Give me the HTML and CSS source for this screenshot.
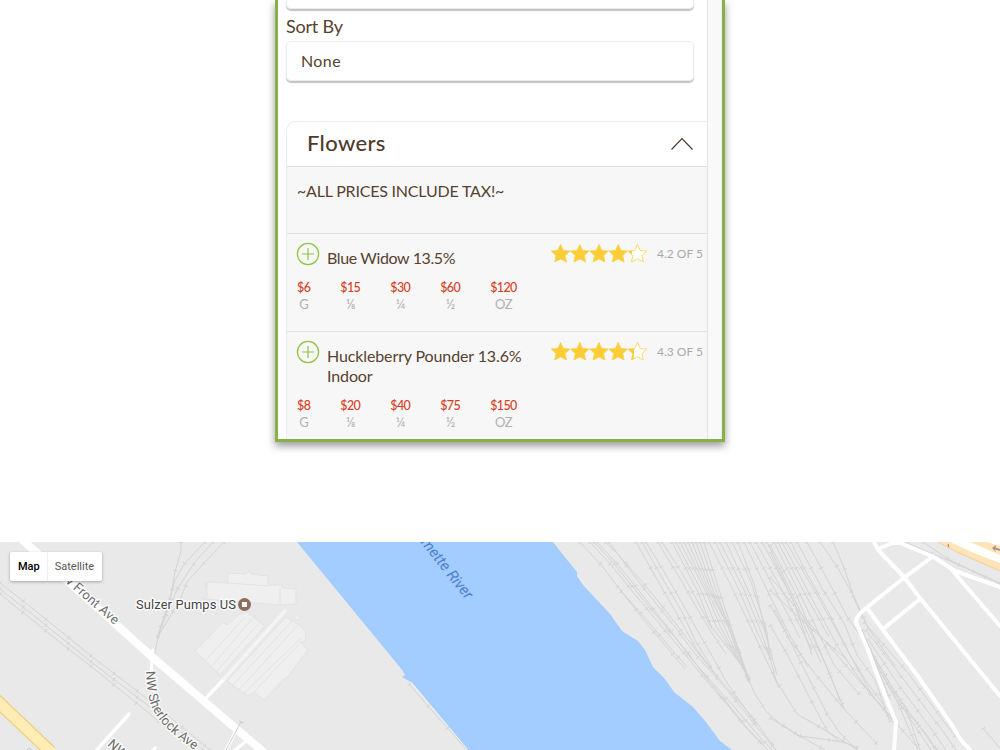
FILE: index.html
```html
<!DOCTYPE html>
<html lang="en">
<head>
<meta charset="utf-8">
<title>Menu</title>
<link rel="stylesheet" href="styles.css">
</head>
<body>
<svg class="defs" width="0" height="0">
  <defs>
    <path id="star" d="M9.6 0.4 L12.3 6.4 L18.9 7.1 L14.1 11.6 L15.5 18 L9.6 14.9 L3.7 18 L5.1 11.6 L0.3 7.1 L6.9 6.4 Z"/>
    <linearGradient id="part2"><stop offset=".2" stop-color="#fccd34"/><stop offset=".2" stop-color="#fff"/></linearGradient>
    <linearGradient id="part3"><stop offset=".33" stop-color="#fccd34"/><stop offset=".33" stop-color="#fff"/></linearGradient>
  </defs>
</svg>
<main class="frame">
  <div class="content">
    <div class="select select-prev"></div>
    <label class="label">Sort By</label>
    <div class="select"><span class="value">None</span></div>
    <section class="group">
      <header class="group-head">
        <h2>Flowers</h2>
        <svg class="chevron" width="24" height="14" viewBox="0 0 24 14"><path d="M1.5 12.5 L12 1.5 L22.5 12.5" fill="none" stroke="#4e3b2a" stroke-width="1.2"/></svg>
      </header>
      <div class="note"><span>~ALL PRICES INCLUDE TAX!~</span></div>
      <article class="item">
        <div class="top">
          <svg class="plus" width="24" height="24" viewBox="0 0 24 24"><circle cx="12" cy="12" r="10.6"/><path d="M12 6v12M6 12h12"/></svg>
          <h3 class="tight">Blue Widow 13.5%</h3>
          <svg class="stars" width="97" height="19" viewBox="0 0 97 19"><use href="#star"/><use href="#star" x="19.2"/><use href="#star" x="38.4"/><use href="#star" x="57.6"/><use href="#star" x="76.8" fill="url(#part2)"/></svg>
          <span class="score">4.2 OF 5</span>
        </div>
        <ul class="prices">
          <li><b>$6</b><i>G</i></li><li><b>$15</b><i>⅛</i></li><li><b>$30</b><i>¼</i></li><li><b>$60</b><i>½</i></li><li><b>$120</b><i>OZ</i></li>
        </ul>
      </article>
      <article class="item">
        <div class="top">
          <svg class="plus" width="24" height="24" viewBox="0 0 24 24"><circle cx="12" cy="12" r="10.6"/><path d="M12 6v12M6 12h12"/></svg>
          <h3>Huckleberry Pounder 13.6% Indoor</h3>
          <svg class="stars" width="97" height="19" viewBox="0 0 97 19"><use href="#star"/><use href="#star" x="19.2"/><use href="#star" x="38.4"/><use href="#star" x="57.6"/><use href="#star" x="76.8" fill="url(#part3)"/></svg>
          <span class="score">4.3 OF 5</span>
        </div>
        <ul class="prices">
          <li><b>$8</b><i>G</i></li><li><b>$20</b><i>⅛</i></li><li><b>$40</b><i>¼</i></li><li><b>$75</b><i>½</i></li><li><b>$150</b><i>OZ</i></li>
        </ul>
      </article>
    </section>
  </div>
  <div class="track"></div>
</main>
<section class="map">
<svg width="1000" height="208" viewBox="0 542 1000 208">
  <defs>
    <path id="rails" d="M0 583L32 608L90 655L150 701L210 750M0 589L32 614L90 661L150 707L203 750M0 594L25 614L67 648L92 667L140 706L194 750
    M181 542V551L175 572L170 600L160 630L151 668M205 542L185 563L175 580L168 605L157 638M213 542L195 562L178 588L170 605L157 638M224 542L205 562L187 582L180 600L157 638
    M409 684L436 715L467 750
    M580 542L602 566L621 591L644 620L665 645L685 669M621 591L646 619L667 644L687 667
    M590 542L612 566L632 591L663 628L684 653L704 678L725 702L745 727L768 750M594 542L616 566L636 591L667 628L688 653L708 680L728 704L748 729L768 750M597 542L620 567L640 592L670 630L690 657L715 686L736 709L757 734L772 750
    M605 542L617 553L638 577L658 601L676 624L695 649L715 674L736 698L757 723L776 750M609 542L626 565L646 591L675 627L696 655L716 677L736 701L756 726L776 750
    M636 542L650 567L666 595L682 623L697 650L716 675M642 542L652 560L668 588L682 612L695 640L712 668M646 542L666 575L682 603L696 628L711 654L727 683L757 725M658 542L666 556L681 580L695 605L710 630L726 654M662 542L682 573L698 602L712 629
    M672 542L697 590L711 626L742 666L750 683M676 542L701 590L716 626L742 666M680 542L705 590L720 626L743 668M684 542L707 590L724 626L743 668M688 542L709 590L728 626L750 683M692 542L711 590L728 626L750 683M696 542L713 590L730 626L750 683M700 542L716 590L733 640L750 683M704 542L719 590L737 645L750 683L755 694L766 711L779 723L800 737
    M709 542L733 590L753 632L769 666L779 688M715 542L739 590L757 632L771 660M720 542L744 590L761 632L771 660M726 542L748 590L765 632L777 675M732 542L751 582L767 632L770 658M738 542L755 587L768 642M744 542L768 592L788 632L808 667M750 542L775 590L800 638M756 542L782 590L812 650M762 542L790 594L821 663
    M767 542L792 594L825 663L844 709M770 545L796 594L828 670L844 709M770 552L793 600L812 655M774 542L800 594L834 665L860 695M778 542L804 592L829 637M782 542L809 593L839 649L866 688L895 724M786 542L814 590L842 640L874 699M791 542L805 570L830 615L850 655L866 681L886 708M797 542L823 590L845 625L857 655L875 680L890 722M807 542L832 588L848 618L870 650L890 699M820 542L838 568L854 597L861 612L868 628L895 666M833 542L845 570L853 595L862 618
    M770 577L811 625L856 677L880 704L915 745M770 590L807 625L847 660M770 605L790 640L812 670L844 709L878 745M775 610L797 655L827 714L839 732L857 750M770 625L787 654L802 683L816 710L828 732L840 742M770 658L776 680L797 714L828 732L858 750M770 718L800 736L825 750M800 736L843 742L858 748
    M864 622L909 674L950 730L968 750M866 630L904 680L942 730L956 750M868 639L900 687L932 730L946 750M870 650L896 694L918 724L936 750M872 658L901 705L931 750M865 642L890 684L906 708L920 750M862 630L881 673L898 703L918 750M900 704L927 735L937 750M983 728L1000 748
    M905 542L933 554L957 564L985 577L1000 584M923 542L948 559L973 571L1000 583"/>
  </defs>
  <rect y="542" width="1000" height="208" fill="#e9e9e9"/>
  <path fill="#a3ccff" d="M297 542L403 671L405 675L402 677L411 682L468 750H732L720 741L706 722L693 707L674 692L665 679L653 667L645 650L638 641L622 631L610 614L597 600L583 585L577 576V572L564 556L553 542Z"/>
  <path d="M411 682L468 750" stroke="#f0f0f0" fill="none"/>
  <use href="#rails" class="rail"/>
  <use href="#rails" class="ties"/>
  <g class="build">
    <path d="M228 573L246 574V572H251V574L268 576V585L282 585V588L296 589V604L280 605L205 599L208 582L228 583Z"/>
    <path d="M205 582L208 599M280 588V604M228 583L268 586M201 598L205 599"/>
    <path d="M195 651L223 622L227 625L240 614L247 612L265 626L220 675ZM205 661L245 617M211 667L252 619M216 672L259 623"/>
    <path d="M227 681L286 617L303 628L306 634L305 641L300 642L308 650L300 660L289 675L282 681L264 700L254 692L248 696ZM232 686L292 621M238 691L297 626M243 694L301 638M254 692L301 642M294 617L297 614L300 618L297 621Z"/>
  </g>
  <g class="road">
    <path d="M22 539.500L150 655L268 756" stroke-width="8"/>
    <path d="M207 697L224 679" stroke-width="3.500"/><path d="M224 679L285 611" stroke="#f4f4f4" stroke-width="3.500"/>
    <path d="M153 650L151 672" stroke-width="3"/><path d="M129 714L95 752M155 748L148 756M238 727L225 752M250 738L234 751" stroke-width="3.500"/>
    <path d="M874 542L878 550L904 577L920 598L1000 696" stroke-width="4"/>
    <path d="M878 549L893 543H900L932 556L955 571L1000 587" stroke-width="4"/>
    <path d="M932 557L905 577L866 608Q853 618 857 625L868 650L884 693L896 722L894 750M867 608L883 630L917 675L952 725L960 739L970 750M883 629L920 599M952 570L1000 626" stroke-width="4"/>
  </g>
  <path d="M241 722L226 750M239 721L244 723M24 753L29 748L33 751" stroke="#ccc" fill="none"/>
  <path d="M-6 698L51 752" stroke="#f0ce80" stroke-width="13"/><path d="M-6 698L53 754" stroke="#ffedb5" stroke-width="10.500"/>
  <path d="M938 542L957 552L1000 571V542Z" fill="#ffe3b9"/>
  <path d="M950 542L974 553L1000 563V555L970 542Z" fill="#fff"/>
  <path d="M987 542L1000 546V542Z" fill="#fff"/>
  <path d="M938 542L957 552L1000 571" fill="none" stroke="#f0cf96"/>
  <path d="M992 548L996 545L995.500 547.500L1000 549V551L995 549.500L996 552Z" fill="#a6978a"/><path d="M948 544L949 547" stroke="#8d8070"/>
  <g class="maptext">
    <text transform="translate(54 572.500) rotate(41)" font-size="13" textLength="80">NW Front Ave</text>
    <path id="sher" d="M146 671C147 699 151 711 164 725S187 744 205 758" fill="none" stroke="none"/>
    <text font-size="13"><textPath href="#sher" textLength="98">NW Sherlock Ave</textPath></text>
    <text transform="translate(107 745) rotate(42)" font-size="13">NW</text>
    <text x="136" y="608.500" font-size="13" textLength="100" class="place">Sulzer Pumps US</text>
  </g>
  <text class="river" transform="translate(466 600) rotate(51.500)" text-anchor="end">Willamette River</text>
  <circle cx="244.500" cy="604.500" r="6.500" fill="#8d6e63"/><rect x="242" y="602" width="5" height="5" fill="#fff"/>
</svg>
<div class="control"><span class="on">Map</span><span>Satellite</span></div>
</section>
</body>
</html>
```
FILE: styles.css
```css
* { box-sizing: border-box; }
body { margin: 0; width: 1000px; height: 750px; overflow: hidden; background: #fff; font-family: Lato, "Open Sans", sans-serif; color: #56422f; display: flex; flex-direction: column; }
.defs { position: absolute; }
.frame { width: 450px; height: 442px; flex: none; margin: 0 auto 100px; border: 3px solid #87b04b; border-top: 0; display: flex; box-shadow: 0 4px 8px rgba(0,0,0,.4); background: #fff; overflow: hidden; }
.content { width: 430px; padding-left: 8px; border-right: 1px solid #e4e4e4; flex: none; }
.track { flex: 1; background: #f9f9f9; border-right: 1px solid #eee; }
.select { width: 408px; height: 40px; border: 1px solid #ececec; border-radius: 5px; box-shadow: 0 2px 1px #c4c4c4; margin-top: 1px; padding: 0 14px; line-height: 37px; font-size: 16px; letter-spacing: .4px; }
.select-prev { height: 9px; margin-top: 0; border-top: 0; border-radius: 0 0 5px 5px; }
.label { display: block; font-size: 18px; line-height: 24px; margin-top: 5px; height: 26px; letter-spacing: -.2px; }
.group { margin-top: 40px; border: 1px solid #ececec; border-right: 0; border-radius: 10px 0 0 0; background: #f7f7f7; height: 340px; overflow: hidden; }
.group-head { height: 45px; background: #fff; border-bottom: 1px solid #e0e0e0; display: flex; align-items: center; justify-content: space-between; padding: 0 13px 0 20px; }
h2 { margin: 0; padding-bottom: 3px; font-size: 22px; font-weight: 500; letter-spacing: .35px; color: #4e3b2a; }
.note { height: 67px; border-bottom: 1px solid #e0e0e0; padding: 14px 10px; font-size: 16px; line-height: 20px; letter-spacing: -.2px; }
.item { border-bottom: 1px solid #e0e0e0; padding: 8px 4px 19px 9px; }
.top { display: flex; align-items: flex-start; }
.plus { fill: none; stroke: #8dc63f; stroke-width: 1.2; flex: none; }
h3 { margin: 6px 0 0 7px; width: 224px; font-size: 16px; line-height: 20px; font-weight: 400; letter-spacing: -.12px; }
h3.tight { letter-spacing: -.38px; }
.stars { flex: none; margin-top: 2px; fill: #fccd34; stroke: #f7d14a; stroke-width: .8; }
.score { margin-left: auto; font-size: 12px; line-height: 16px; margin-top: 4px; color: #aaa; white-space: nowrap; }
.prices { margin: 12px 0 0 1px; padding: 0; list-style: none; display: flex; gap: 30px; }
li { display: flex; flex-direction: column; align-items: center; font-size: 12.5px; line-height: 16px; letter-spacing: -.6px; }
b { font-weight: 500; color: #d6401f; }
i { font-style: normal; color: #b0b0b0; font-size: 13px; }
.map { position: relative; height: 208px; flex: none; font-family: Roboto, sans-serif; }
.map svg { display: block; }
.rail, .ties { fill: none; stroke: #d4d4d4; stroke-width: 1; }
.ties { stroke-width: 4.5; stroke-dasharray: 1 28; }
.build { fill: #efefef; stroke: #dfdfdf; stroke-width: .8; }
.road { fill: none; stroke: #fff; stroke-linejoin: round; stroke-linecap: round; }
.maptext text { fill: #6b6b6b; stroke: #fff; stroke-width: 3px; stroke-opacity: .75; paint-order: stroke; stroke-linejoin: round; }
.maptext .place { fill: #444; }
.river { font-style: italic; font-size: 15px; fill: #4a80d0; }
.control { position: absolute; left: 10px; top: 10px; height: 29px; display: flex; background: #fff; border-radius: 2px; box-shadow: 0 1px 3px rgba(0,0,0,.3); font-size: 11px; line-height: 29px; color: #565656; }
.control span { padding: 0 8px 0 7px; white-space: nowrap; }
.control .on { font-weight: 500; color: #000; border-right: 1px solid #eee; padding: 0 7px 0 8px; }
```
